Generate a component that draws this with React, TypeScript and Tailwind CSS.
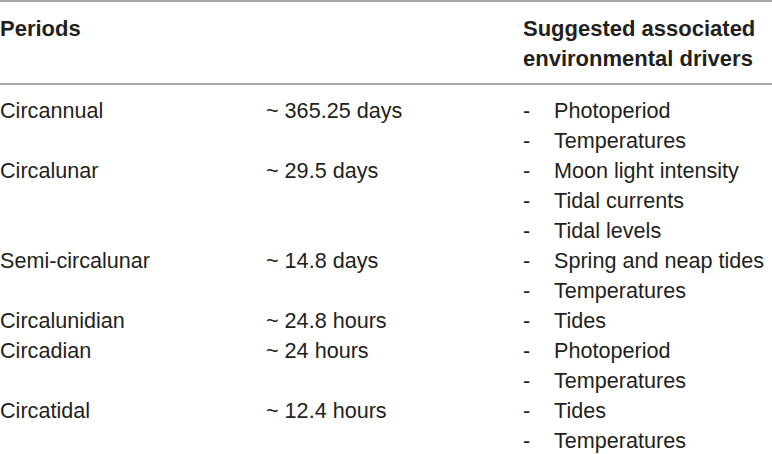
const rows = [
  { period: "Circannual", value: "~ 365.25 days", drivers: ["Photoperiod", "Temperatures"] },
  { period: "Circalunar", value: "~ 29.5 days", drivers: ["Moon light intensity", "Tidal currents", "Tidal levels"] },
  { period: "Semi-circalunar", value: "~ 14.8 days", drivers: ["Spring and neap tides", "Temperatures"] },
  { period: "Circalunidian", value: "~ 24.8 hours", drivers: ["Tides"] },
  { period: "Circadian", value: "~ 24 hours", drivers: ["Photoperiod", "Temperatures"] },
  { period: "Circatidal", value: "~ 12.4 hours", drivers: ["Tides", "Temperatures"] },
];

const App = () => {
  return (
    <div className="w-[772px] h-[454px] overflow-hidden bg-white text-[#231f20] font-['Liberation_Sans',Arial,sans-serif] text-[21.6px] leading-[30px]">
      <div className="border-t-2 border-[#a6a6a6] border-b-2 pt-[12px] pb-[9px] grid grid-cols-[266px_257px_1fr] font-bold text-[22px]">
        <div>Periods</div>
        <div></div>
        <div>
          Suggested associated
          <br />
          environmental drivers
        </div>
      </div>
      <div className="pt-[11px]">
        {rows.map((r) => (
          <div key={r.period} className="grid grid-cols-[266px_257px_1fr]">
            <div>{r.period}</div>
            <div>{r.value}</div>
            <div className="flex flex-col">
              {r.drivers.map((d) => (
                <div key={d} className="flex">
                  <span className="w-[31px]">-</span>
                  <span>{d}</span>
                </div>
              ))}
            </div>
          </div>
        ))}
      </div>
    </div>
  );
};

export default App;
